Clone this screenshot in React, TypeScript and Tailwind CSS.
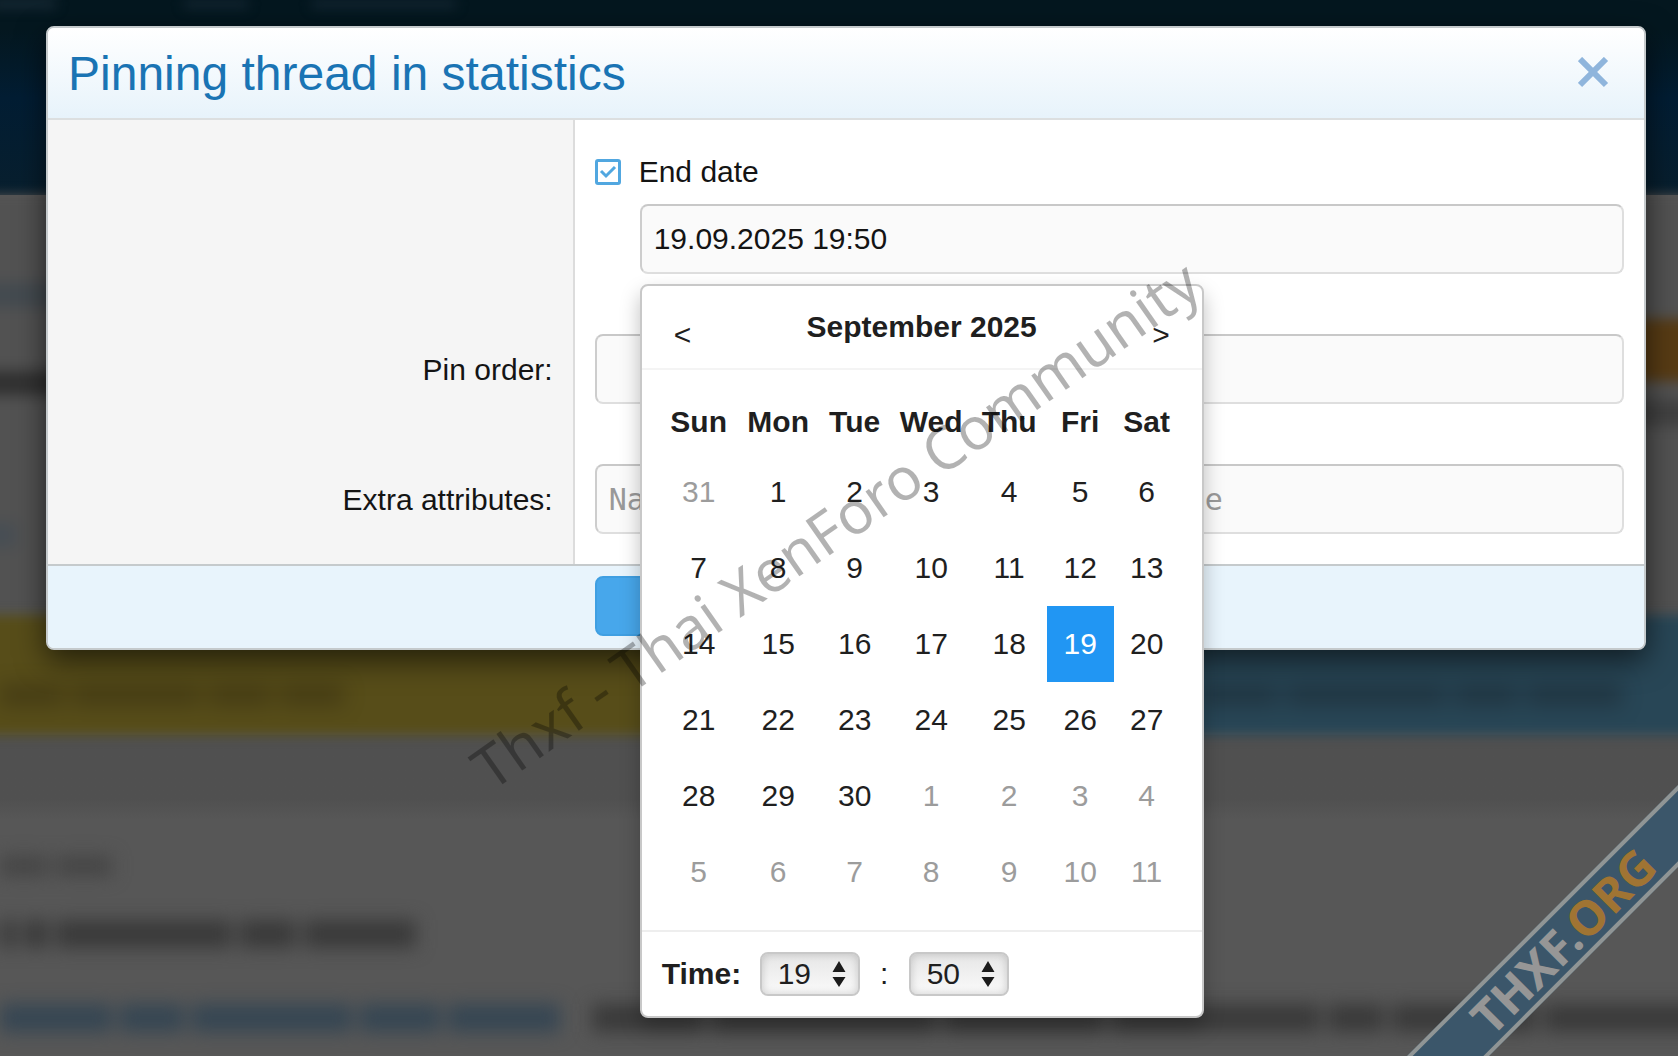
import { useState } from "react";

const weeks = [
  [31, 1, 2, 3, 4, 5, 6],
  [7, 8, 9, 10, 11, 12, 13],
  [14, 15, 16, 17, 18, 19, 20],
  [21, 22, 23, 24, 25, 26, 27],
  [28, 29, 30, 1, 2, 3, 4],
  [5, 6, 7, 8, 9, 10, 11],
];

const days = [
  { name: "Sun", width: "w-[78px]" },
  { name: "Mon", width: "w-[81px]" },
  { name: "Tue", width: "w-[72px]" },
  { name: "Wed", width: "w-[81px]" },
  { name: "Thu", width: "w-[75px]" },
  { name: "Fri", width: "w-[67px]" },
  { name: "Sat", width: "w-[66px]" },
];

function BlurredWords({ widths, tone }: { widths: string[]; tone: string }) {
  return (
    <div className="flex gap-2 blur-[9px]">
      {widths.map((w, i) => (
        <div key={i} className={`${w} ${tone} shrink-0`} />
      ))}
    </div>
  );
}

function Page() {
  return (
    <div aria-hidden="true" className="absolute inset-0 overflow-hidden bg-[#575757]">
      <div className="-mx-6 flex flex-col">
        <div className="h-[195px] shrink-0 bg-linear-to-b from-[#04171f] from-15% via-[#021d33] via-50% to-[#081f2e]">
          <div className="flex gap-12 pl-4">
            <div className="h-2 w-16 bg-[#1a2c38] blur-[6px]" />
            <div className="ml-20 h-2 w-16 bg-[#152733] blur-[6px]" />
            <div className="ml-4 h-2 w-36 bg-[#152733] blur-[6px]" />
          </div>
        </div>
        <div className="flex h-[420px] shrink-0 justify-between bg-[#525252] blur-[6px]">
          <div className="flex w-24 flex-col pt-[88px]">
            <div className="h-6 bg-[#434a50] blur-[4px]" />
            <div className="mt-16 h-6 bg-[#303030] blur-[4px]" />
            <div className="mt-32 h-6 w-10 bg-[#474e54] blur-[4px]" />
          </div>
          <div className="flex w-24 flex-col pt-[124px]">
            <div className="h-[62px] bg-[#573b14] blur-[2px]" />
            <div className="mt-5 h-6 bg-[#404040] blur-[4px]" />
          </div>
        </div>
        <div className="flex h-[120px] shrink-0 blur-[6px]">
          <div className="flex flex-1 items-center bg-[#574d19] pt-10 pl-6">
            <BlurredWords tone="h-5 bg-[#443b14]" widths={["w-16", "w-32", "w-16", "w-16"]} />
          </div>
          <div className="flex flex-1 items-center justify-end bg-[#284656] pt-10 pr-20">
            <BlurredWords tone="h-5 bg-[#203440]" widths={["w-20", "w-40", "w-16", "w-24"]} />
          </div>
        </div>
        <div className="h-[85px] shrink-0 bg-linear-to-b from-[#505050] from-75% to-[#575757]" />
        <div className="flex flex-col pt-9 pl-6">
          <BlurredWords tone="h-5 bg-[#454545]" widths={["w-12", "w-14"]} />
          <div className="mt-11">
            <BlurredWords tone="h-7 bg-[#3a3a3a]" widths={["w-4", "w-6", "w-44", "w-14", "w-28"]} />
          </div>
          <div className="mt-14 flex gap-8">
            <BlurredWords tone="h-7 bg-[#364653]" widths={["w-28", "w-16", "w-40", "w-20", "w-28"]} />
            <BlurredWords tone="h-7 bg-[#3a3a3a]" widths={["w-28", "w-56", "w-40", "w-52", "w-14", "w-36", "w-40"]} />
          </div>
        </div>
      </div>
    </div>
  );
}

function TimeSelect({ label, value }: { label: string; value: string }) {
  return (
    <div className="relative h-11 w-[100px] rounded-lg border-2 border-[#c8c8c8] bg-linear-to-b from-[#e6e6e6] to-[#fafafa] shadow-[inset_0_0_8px_rgba(0,0,0,0.18)]">
      <select aria-label={label} defaultValue={value} className="h-full w-full appearance-none bg-transparent pl-4 text-[30px] leading-10 outline-none">
        <option>{value}</option>
      </select>
      <svg viewBox="0 0 14 26" className="pointer-events-none absolute top-[7px] right-[12px] h-[26px] w-[14px] fill-[#1c1c1c]">
        <path d="M7 0L13.5 11H.5zM7 26L.5 16h13z" />
      </svg>
    </div>
  );
}

function Calendar() {
  return (
    <div className="absolute top-full left-0 z-10 mt-[10px] w-[564px] rounded-lg border-2 border-[#c8c8c8] bg-white text-[#1f1f1f] shadow-[0_10px_20px_rgba(0,0,0,0.25)]">
      <div className="flex h-[84px] items-center justify-between border-b-2 border-[#f4f4f4] px-8">
        <button aria-label="Previous month" className="mt-4">&lt;</button>
        <strong>September 2025</strong>
        <button aria-label="Next month" className="mt-4">&gt;</button>
      </div>
      <table className="mt-3 mr-[22px] mb-5 ml-[18px] table-fixed text-center">
        <thead>
          <tr className="h-[72px]">
            {days.map((d) => (
              <th key={d.name} className={`${d.width} pt-2 pb-0`}>{d.name}</th>
            ))}
          </tr>
        </thead>
        <tbody>
          {weeks.map((week, w) => (
            <tr key={w} className="h-[76px]">
              {week.map((n) => {
                const outside = (w === 0 && n > 20) || (w > 3 && n < 20);
                return (
                  <td key={n} className="p-0">
                    <button
                      className={
                        n === 19
                          ? "h-[76px] w-full bg-[#2196f3] text-white"
                          : outside
                            ? "h-[76px] w-full text-[#9c9c9c]"
                            : "h-[76px] w-full"
                      }
                    >
                      {n}
                    </button>
                  </td>
                );
              })}
            </tr>
          ))}
        </tbody>
      </table>
      <div className="flex h-[86px] items-center border-t-2 border-[#eee] pl-5">
        <strong className="w-[98px]">Time:</strong>
        <TimeSelect label="Hour" value="19" />
        <span className="w-[49px] text-center">:</span>
        <TimeSelect label="Minute" value="50" />
      </div>
    </div>
  );
}

const inputClass =
  "block h-[70px] w-full rounded-lg border-2 border-[#dedede] border-t-[#c8c8c8] border-l-[#cdcdcd] bg-[#fafafa] px-3 outline-none";

export default function App() {
  const [ends, setEnds] = useState(true);
  return (
    <div className="relative h-screen overflow-hidden font-['Liberation_Sans',Arial,sans-serif] text-[30px] leading-10 text-[#141414]">
      <Page />
      <div role="dialog" aria-labelledby="title" className="relative mx-auto mt-[26px] mr-8 ml-[46px] rounded-lg border-2 border-[#c5cacc] bg-white shadow-[0_10px_30px_rgba(0,0,0,0.6)]">
        <header className="flex h-[92px] items-center justify-between rounded-t-md border-b-2 border-[#dcdfe0] bg-linear-to-b from-white to-[#e7f3fb] pr-[34px] pl-5">
          <h1 id="title" className="pt-0.5 text-[48px] leading-[56px] text-[#1a74b4]">Pinning thread in statistics</h1>
          <button aria-label="Close" className="text-[#8fb5dc]">
            <svg viewBox="0 0 32 32" className="size-8" fill="none" stroke="currentColor" strokeWidth="6">
              <path d="M2 2l26 26M28 2L2 28" />
            </svg>
          </button>
        </header>
        <form className="grid grid-cols-[33%_1fr]">
          <div className="border-r-2 border-[#dcdcdc] bg-[#f5f5f5]" />
          <div className="px-5 pt-8 pb-[30px]">
            <label className="flex items-center gap-[18px]">
              <span className="relative flex">
                <input type="checkbox" checked={ends} onChange={() => setEnds(!ends)} className="size-[26px] appearance-none rounded-[3px] border-[3px] border-[#51a7e0] bg-white" />
                {ends && (
                  <svg viewBox="0 0 26 26" className="pointer-events-none absolute inset-0" fill="none" stroke="#51a7e0" strokeWidth="3">
                    <path d="M6 12l5 5 9-9" />
                  </svg>
                )}
              </span>
              End date
            </label>
            <div className="relative mt-3 ml-[45px]">
              <input aria-label="End date" defaultValue="19.09.2025 19:50" className={inputClass} />
              <Calendar />
            </div>
          </div>
          <label htmlFor="order" className="border-r-2 border-[#dcdcdc] bg-[#f5f5f5] pt-[46px] pr-5 text-right">Pin order:</label>
          <div className="px-5 py-[30px]">
            <input id="order" className={inputClass} />
          </div>
          <label htmlFor="attrs" className="border-r-2 border-[#dcdcdc] bg-[#f5f5f5] pt-[46px] pr-5 text-right">Extra attributes:</label>
          <div className="px-5 py-[30px] font-['DejaVu_Sans_Mono',monospace]">
            <input id="attrs" placeholder="Name of an attribute and its value" className={`${inputClass} placeholder:text-[#999]`} />
          </div>
        </form>
        <footer className="h-[84px] rounded-b-md border-t-2 border-[#c5cacc] bg-[#e8f4fc] pt-[10px] pl-[33%]">
          <button aria-label="Save" className="ml-5 block h-[60px] w-[200px] rounded-lg border-2 border-[#3f9fe2] bg-[#47a7eb]" />
        </footer>
      </div>
      <div className="pointer-events-none absolute top-[524px] left-[835px] z-20 -translate-1/2 -rotate-35 whitespace-nowrap font-['Noto_Sans','Open_Sans',sans-serif] text-[59px] leading-none text-black/30">
        Thxf - Thai XenForo Community
      </div>
      <div className="pointer-events-none absolute right-0 bottom-0 z-20 size-[280px] overflow-hidden">
        <div className="absolute top-[165px] left-[165px] flex h-[58px] w-[500px] -translate-1/2 -rotate-45 items-center justify-center border-y-4 border-[#909595] bg-[#3b566a] font-['Noto_Sans','Open_Sans',sans-serif] text-[48px] leading-none font-bold text-[#969696]">
          THXF.<span className="text-[#a07433]">ORG</span>
        </div>
      </div>
    </div>
  );
}
